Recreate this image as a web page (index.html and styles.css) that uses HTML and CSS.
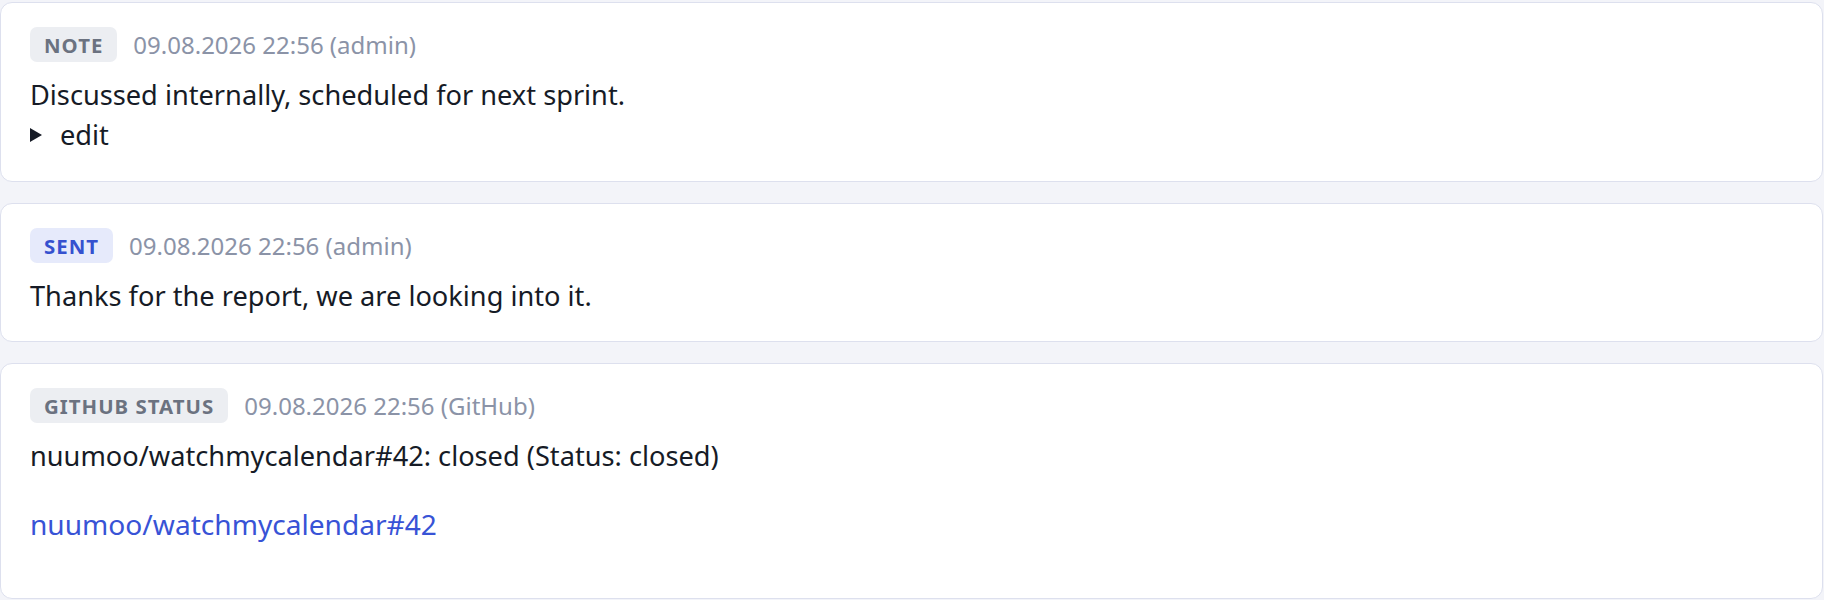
FILE: index.html
```html
<!DOCTYPE html>
<html lang="en">
<head>
<meta charset="utf-8">
<title>Ticket history</title>
<link rel="stylesheet" href="styles.css">
</head>
<body>
<div class="timeline">
  <article class="entry">
    <header class="entry-head">
      <span class="badge badge-note">NOTE</span>
      <span class="meta">09.08.2026 22:56 (admin)</span>
    </header>
    <div class="entry-body">
      <p class="line">Discussed internally, scheduled for next sprint.</p>
      <details class="edit">
        <summary><svg class="tri" viewBox="0 0 12 14" width="12" height="14"><path d="M0 0 L12 7 L0 14 Z" fill="#161b26"/></svg><span>edit</span></summary>
      </details>
    </div>
  </article>
  <article class="entry">
    <header class="entry-head">
      <span class="badge badge-sent">SENT</span>
      <span class="meta">09.08.2026 22:56 (admin)</span>
    </header>
    <div class="entry-body">
      <p class="line">Thanks for the report, we are looking into it.</p>
    </div>
  </article>
  <article class="entry">
    <header class="entry-head">
      <span class="badge badge-note">GITHUB STATUS</span>
      <span class="meta">09.08.2026 22:56 (GitHub)</span>
    </header>
    <div class="entry-body">
      <p class="line">nuumoo/watchmycalendar#42: closed (Status: closed)</p>
      <p class="link-line"><a href="#" class="issue-link">nuumoo/watchmycalendar#42</a></p>
    </div>
  </article>
</div>
</body>
</html>
```

FILE: styles.css
```css
* { box-sizing: border-box; }
html, body {
  margin: 0;
  padding: 0;
  background: #f3f4f9;
  font-family: "Noto Sans", "Open Sans", sans-serif;
  color: #161b26;
}
.timeline {
  display: flex;
  flex-direction: column;
  gap: 21px;
  padding: 2px 1px 0 0;
}
.entry {
  background: #ffffff;
  border: 1px solid #dde0ee;
  border-radius: 12px;
  padding: 24px 29px 26px;
}
.entry-head {
  display: flex;
  align-items: center;
  gap: 16px;
  height: 35px;
}
.badge {
  display: inline-flex;
  align-items: center;
  height: 35px;
  padding: 0 14px;
  border-radius: 7px;
  font-size: 20.4px;
  font-weight: 700;
  letter-spacing: 0.05em;
}
.badge-note {
  background: #eceef2;
  color: #6b7280;
}
.badge-sent {
  background: #e6eafb;
  color: #3551cf;
}
.meta {
  font-size: 24px;
  color: #8b93a7;
}
.entry-body {
  margin-top: 13px;
  font-size: 27.2px;
  line-height: 39px;
}
.line { margin: 0; }
.link-line { margin: 30px 0 28px; }
.issue-link {
  color: #3853d6;
  font-size: 28.1px;
  text-decoration: none;
}
.edit summary {
  list-style: none;
  display: flex;
  align-items: center;
  gap: 18px;
  height: 41px;
  cursor: pointer;
}
.edit summary::-webkit-details-marker { display: none; }
.tri { display: block; flex: none; }
```
